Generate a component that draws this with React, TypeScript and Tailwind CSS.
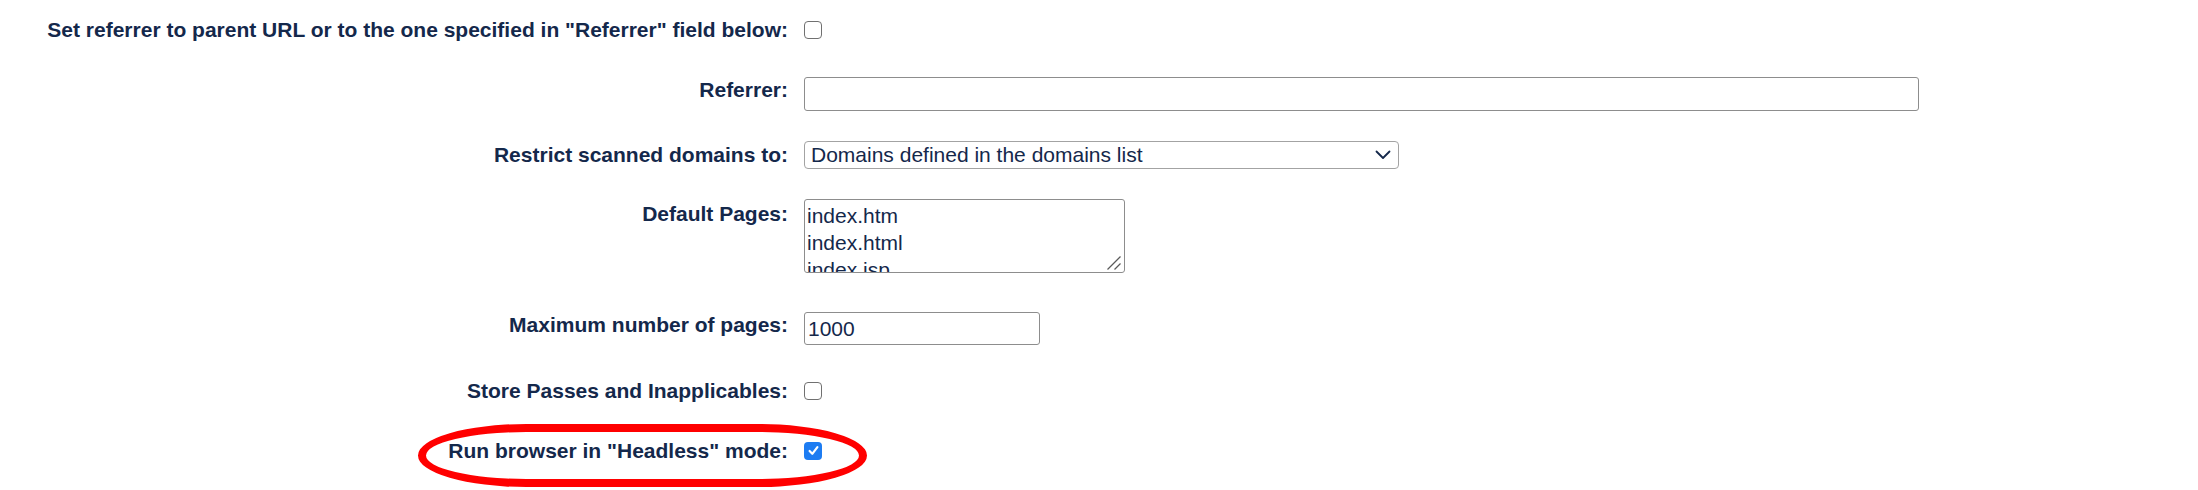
import React from "react";

const labelCls =
  "w-[788px] shrink-0 text-right font-bold text-[21px] leading-[24px] text-[#14284b]";

function Box({ checked }: { checked?: boolean }) {
  if (checked) {
    return (
      <div className="w-[18px] h-[18px] rounded-[4px] bg-[#1d7cf2] flex items-center justify-center">
        <svg width="13" height="13" viewBox="0 0 13 13">
          <path
            d="M2.6 7 L5.3 9.8 L10.4 3.2"
            stroke="white"
            strokeWidth="2.2"
            fill="none"
            strokeLinecap="round"
            strokeLinejoin="round"
          />
        </svg>
      </div>
    );
  }
  return <div className="w-[18px] h-[18px] rounded-[4px] border-[1.5px] border-[#707070] bg-white" />;
}

export default function App() {
  return (
    <div className="w-[2198px] h-[490px] bg-white overflow-hidden font-['Liberation_Sans',Arial,sans-serif] pt-[13px]">
      {/* Row 1 */}
      <div className="flex items-center gap-[16px] h-[34px]">
        <div className={labelCls}>
          Set referrer to parent URL or to the one specified in "Referrer" field below:
        </div>
        <Box />
      </div>

      {/* Row 2 */}
      <div className="flex items-center gap-[16px] h-[34px] mt-[30px]">
        <div className={labelCls + " pb-[8px]"}>Referrer:</div>
        <div className="w-[1115px] h-[34px] border border-[#8d8d8d] rounded-[3px] bg-white" />
      </div>

      {/* Row 3 */}
      <div className="flex items-center gap-[16px] h-[28px] mt-[30px]">
        <div className={labelCls}>Restrict scanned domains to:</div>
        <div className="w-[595px] h-[28px] border border-[#a3a3a3] rounded-[4px] bg-white flex items-center justify-between pl-[6px] pr-[7px]">
          <span className="text-[21px] leading-[24px] text-[#14284b]">Domains defined in the domains list</span>
          <svg width="16" height="10" viewBox="0 0 16 10">
            <path
              d="M1.5 1.5 L8 8 L14.5 1.5"
              stroke="#14284b"
              strokeWidth="1.8"
              fill="none"
              strokeLinecap="round"
              strokeLinejoin="round"
            />
          </svg>
        </div>
      </div>

      {/* Row 4 */}
      <div className="flex items-start gap-[16px] mt-[30px]">
        <div className={labelCls + " pt-[3px]"}>Default Pages:</div>
        <div className="relative w-[321px] h-[74px] border border-[#8d8d8d] rounded-[3px] bg-white overflow-hidden pl-[2px] pt-[2px]">
          <div className="text-[21px] leading-[27px] text-[#14284b]">
            <div>index.htm</div>
            <div>index.html</div>
            <div>index.jsp</div>
          </div>
          <svg className="absolute right-[2px] bottom-[1px]" width="16" height="16" viewBox="0 0 16 16">
            <path d="M1.5 14.5 L14.5 1.5" stroke="#5a5a5a" strokeWidth="1.2" />
            <path d="M8.5 14.5 L14.5 8.5" stroke="#5a5a5a" strokeWidth="1.2" />
          </svg>
        </div>
      </div>

      {/* Row 5 */}
      <div className="flex items-center gap-[16px] h-[33px] mt-[39px]">
        <div className={labelCls + " pb-[7px]"}>Maximum number of pages:</div>
        <div className="w-[236px] h-[33px] border border-[#8d8d8d] rounded-[3px] bg-white flex items-center pl-[3px]">
          <span className="text-[21px] leading-[24px] text-[#14284b]">1000</span>
        </div>
      </div>

      {/* Row 6 */}
      <div className="flex items-center gap-[16px] h-[35px] mt-[28px]">
        <div className={labelCls}>Store Passes and Inapplicables:</div>
        <Box />
      </div>

      {/* Row 7 */}
      <div className="relative flex items-center gap-[16px] h-[35px] mt-[25px]">
        <div className={labelCls}>Run browser in "Headless" mode:</div>
        <Box checked />
        <div className="absolute left-[418px] top-[-9px] w-[449px] h-[63px] border-[8px] border-[#ff0000] rounded-[110px/32px] pointer-events-none" />
      </div>
    </div>
  );
}
